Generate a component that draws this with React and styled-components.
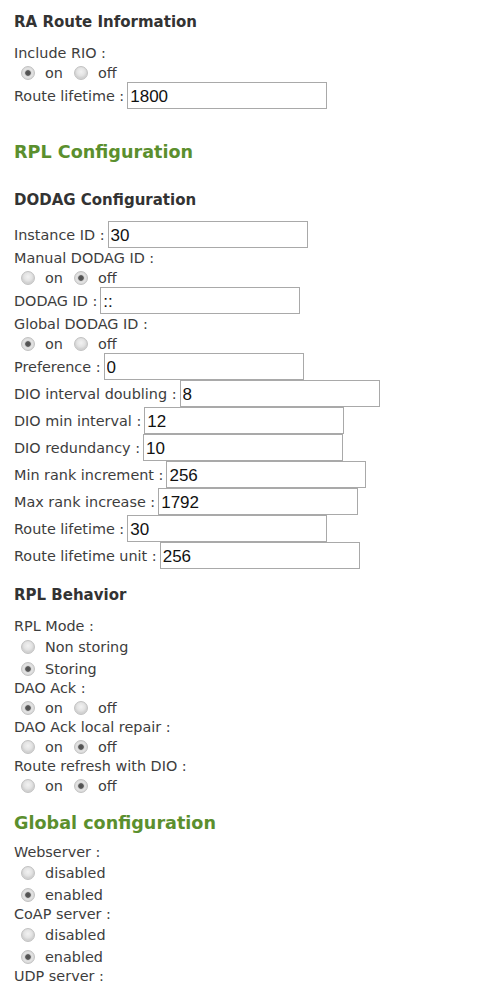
import React from 'react'
import styled, { createGlobalStyle } from 'styled-components'

const Global = createGlobalStyle`
  html, body {
    margin: 0;
    padding: 0;
    background: #ffffff;
  }
  body {
    font-family: "DejaVu Sans", Verdana, sans-serif;
    color: #3d3d3d;
  }
`

const Page = styled.div`
  padding: 12px 0 0 14px;
  width: 475px;
`

const SubTitle = styled.h3`
  margin: ${p => p.top || 0}px 0 11px 0;
  height: 20px;
  line-height: 20px;
  font-size: 15px;
  font-weight: bold;
  color: #333333;
`

const Title = styled.h2`
  margin: ${p => p.top || 0}px 0 ${p => p.bottom || 0}px 0;
  height: 24px;
  line-height: 24px;
  font-size: 17.6px;
  font-weight: bold;
  color: #5b8f2e;
`

const Label = styled.div`
  height: 18px;
  line-height: 20px;
  font-size: 14.4px;
  white-space: nowrap;
`

const Field = styled.div`
  display: flex;
  align-items: center;
  height: 27px;
  font-size: 14.4px;
  white-space: nowrap;
`

const FieldName = styled.span`
  margin-right: 3px;
`

const TextBox = styled.input`
  box-sizing: border-box;
  width: 200px;
  height: 27px;
  margin: 0;
  padding: 2px 2px 0 2px;
  border: 1px solid #a9a9a9;
  font-family: "Liberation Sans", Arial, sans-serif;
  font-size: 17px;
  color: #111111;
  background: #ffffff;
  outline: none;
`

const RadioRow = styled.div`
  display: flex;
  flex-direction: ${p => (p.stack ? 'column' : 'row')};
`

const Option = styled.label`
  display: flex;
  align-items: center;
  height: ${p => p.h}px;
  margin-right: 4px;
  font-size: 14.4px;
  padding-top: 3px;
  box-sizing: border-box;
`

const Radio = styled.span`
  box-sizing: border-box;
  width: 14px;
  height: 14px;
  margin: 0 10px 0 7px;
  border-radius: 50%;
  border: 1px solid #c2c2c2;
  background: ${p =>
    p.checked
      ? 'radial-gradient(circle, #4d4d4d 0, #5a5a5a 2.4px, #d2d2d2 3.2px, #e4e4e4 4.2px, #d8d8d8 6px)'
      : 'radial-gradient(circle at 50% 40%, #f2f2f2 0, #e3e3e3 4px, #d2d2d2 6px)'};
`

function Radios({ options, value, stack }) {
  return (
    <RadioRow stack={stack}>
      {options.map(o => (
        <Option key={o} h={stack ? 22 : 21}>
          <Radio checked={o === value} />
          {o}
        </Option>
      ))}
    </RadioRow>
  )
}

function Input({ name, value }) {
  return (
    <Field>
      <FieldName>{name} :</FieldName>
      <TextBox defaultValue={value} />
    </Field>
  )
}

const onoff = ['on', 'off']
const serv = ['disabled', 'enabled']

export default function App() {
  return (
    <Page>
      <Global />
      <SubTitle>RA Route Information</SubTitle>
      <Label>Include RIO :</Label>
      <Radios options={onoff} value="on" />
      <Input name="Route lifetime" value="1800" />

      <Title top={31}>RPL Configuration</Title>
      <SubTitle top={26}>DODAG Configuration</SubTitle>
      <Input name="Instance ID" value="30" />
      <Label>Manual DODAG ID :</Label>
      <Radios options={onoff} value="off" />
      <Input name="DODAG ID" value="::" />
      <Label>Global DODAG ID :</Label>
      <Radios options={onoff} value="on" />
      <Input name="Preference" value="0" />
      <Input name="DIO interval doubling" value="8" />
      <Input name="DIO min interval" value="12" />
      <Input name="DIO redundancy" value="10" />
      <Input name="Min rank increment" value="256" />
      <Input name="Max rank increase" value="1792" />
      <Input name="Route lifetime" value="30" />
      <Input name="Route lifetime unit" value="256" />

      <SubTitle top={16}>RPL Behavior</SubTitle>
      <Label>RPL Mode :</Label>
      <Radios options={['Non storing', 'Storing']} value="Storing" stack />
      <Label>DAO Ack :</Label>
      <Radios options={onoff} value="on" />
      <Label>DAO Ack local repair :</Label>
      <Radios options={onoff} value="off" />
      <Label>Route refresh with DIO :</Label>
      <Radios options={onoff} value="off" />

      <Title top={16} bottom={7}>Global configuration</Title>
      <Label>Webserver :</Label>
      <Radios options={serv} value="enabled" stack />
      <Label>CoAP server :</Label>
      <Radios options={serv} value="enabled" stack />
      <Label>UDP server :</Label>
      <Radios options={serv} value="enabled" stack />
    </Page>
  )
}
